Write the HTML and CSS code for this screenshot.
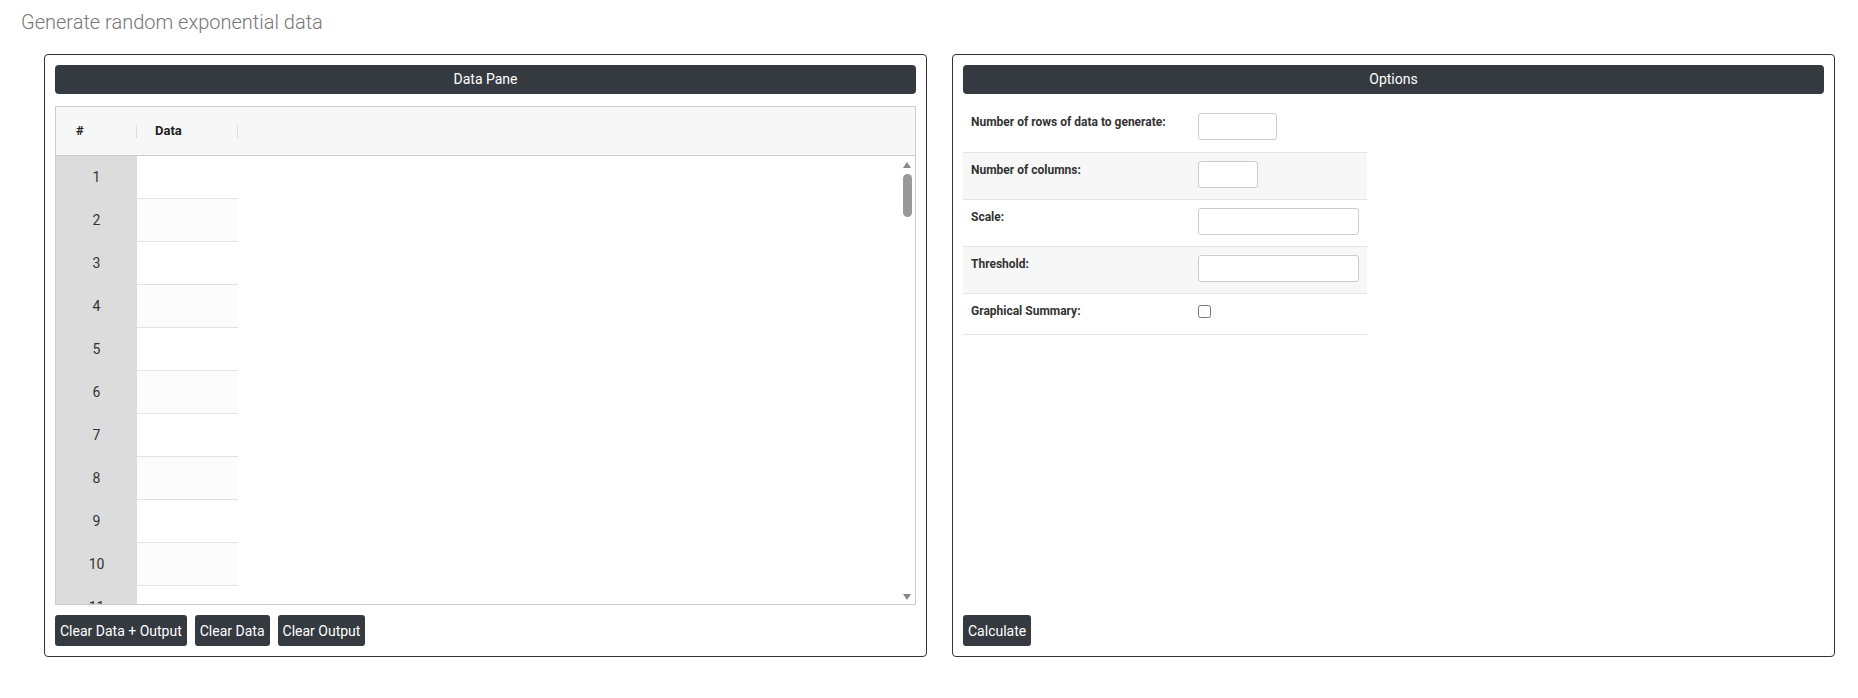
FILE: index.html
```html
<!DOCTYPE html>
<html lang="en">
<head>
  <meta charset="UTF-8">
  <title>Generate random exponential data</title>
  <link rel="stylesheet" href="styles.css">
</head>
<body>
  <div class="page-title">Generate random exponential data</div>
  <div class="panes">
    <div class="pane">
      <div class="pane-header">Data Pane</div>
      <div class="grid">
        <div class="grid-head">
          <div class="head-cell head-index">#</div>
          <div class="head-cell head-data">Data</div>
        </div>
        <div class="grid-body" id="gridBody"></div>
        <div class="scrollbar">
          <div class="arrow-up"></div>
          <div class="thumb"></div>
          <div class="arrow-down"></div>
        </div>
      </div>
      <div class="actions">
        <button class="btn">Clear Data + Output</button>
        <button class="btn">Clear Data</button>
        <button class="btn">Clear Output</button>
      </div>
    </div>
    <div class="pane">
      <div class="pane-header">Options</div>
      <table class="options">
        <tr>
          <td class="opt-label">Number of rows of data to generate:</td>
          <td><input type="text" class="inp inp-sm"></td>
        </tr>
        <tr>
          <td class="opt-label">Number of columns:</td>
          <td><input type="text" class="inp inp-xs"></td>
        </tr>
        <tr>
          <td class="opt-label">Scale:</td>
          <td><input type="text" class="inp inp-lg"></td>
        </tr>
        <tr>
          <td class="opt-label">Threshold:</td>
          <td><input type="text" class="inp inp-lg"></td>
        </tr>
        <tr>
          <td class="opt-label">Graphical Summary:</td>
          <td><input type="checkbox" class="chk"></td>
        </tr>
      </table>
      <div class="actions">
        <button class="btn">Calculate</button>
      </div>
    </div>
  </div>

  <script>
    // fill the empty data grid rows
    const body = document.getElementById('gridBody');
    for (let i = 1; i <= 11; i++) {
      const row = document.createElement('div');
      row.classList.add('grid-row');
      row.innerHTML = `<div class="row-index">${i}</div><div class="row-data"></div>`;
      body.appendChild(row);
    }
  </script>
</body>
</html>
```

FILE: styles.css
```css
body {
  margin: 0;
  font-family: Roboto, 'Liberation Sans', Arial, sans-serif;
  background: #fff;
  color: #212529;
}
.page-title {
  font-size: 20px;
  font-weight: 300;
  color: #777;
  padding: 10px 0 0 21px;
  height: 34px;
  box-sizing: border-box;
  line-height: 24px;
}
.panes {
  display: flex;
  gap: 25px;
  padding: 20px 0 0 44px;
}
.pane {
  width: 883px;
  height: 603px;
  border: 1px solid #333;
  border-radius: 4px;
  padding: 10px;
  box-sizing: border-box;
  display: flex;
  flex-direction: column;
}
.pane-header {
  background: #343a40;
  color: #fff;
  height: 29px;
  line-height: 29px;
  border-radius: 4px;
  text-align: center;
  font-size: 14px;
}
.grid {
  position: relative;
  margin-top: 12px;
  height: 499px;
  border: 1px solid #ccc;
  overflow: hidden;
  box-sizing: border-box;
}
.grid-head {
  display: flex;
  height: 48px;
  background: #f7f7f7;
  border-bottom: 1px solid #ccc;
  align-items: center;
}
.head-cell {
  font-size: 13px;
  font-weight: 700;
  color: #222;
  position: relative;
  height: 100%;
  line-height: 48px;
  box-sizing: border-box;
}
.head-cell::after {
  content: '';
  position: absolute;
  right: 0;
  top: 18px;
  height: 13px;
  border-right: 1px solid #ddd;
}
.head-index {
  width: 81px;
  padding-left: 20px;
}
.head-data {
  width: 101px;
  padding-left: 18px;
}
.grid-row {
  display: flex;
  height: 43px;
}
.row-index {
  width: 81px;
  background: #dcdcdc;
  text-align: center;
  line-height: 43px;
  font-size: 14px;
  color: #333;
}
.row-data {
  width: 101px;
  border-bottom: 1px solid #e2e2e2;
  box-sizing: border-box;
}
.grid-row:nth-child(even) .row-data {
  background: #fcfcfc;
}
.scrollbar {
  position: absolute;
  right: 2px;
  top: 49px;
  bottom: 0;
  width: 11px;
}
.arrow-up, .arrow-down {
  position: absolute;
  left: 1px;
  width: 0;
  height: 0;
  border-left: 4px solid transparent;
  border-right: 4px solid transparent;
}
.arrow-up {
  top: 6px;
  border-bottom: 6px solid #888;
}
.arrow-down {
  bottom: 4px;
  border-top: 6px solid #888;
}
.thumb {
  position: absolute;
  left: 1px;
  top: 18px;
  width: 9px;
  height: 43px;
  background: #999;
  border-radius: 5px;
}
.actions {
  margin-top: auto;
  display: flex;
  gap: 8px;
}
.btn {
  background: #343a40;
  color: #fff;
  border: none;
  border-radius: 3px;
  height: 31px;
  padding: 0 5px;
  font-family: Roboto, 'Liberation Sans', Arial, sans-serif;
  font-size: 14px;
  cursor: pointer;
}
.options {
  border-collapse: collapse;
  width: 404px;
  margin-top: 11px;
}
.options tr {
  border-bottom: 1px solid #e5e5e5;
}
.options tr:nth-child(even) {
  background: #f7f7f7;
}
.options td {
  vertical-align: top;
  height: 47px;
  padding: 8px 0 0 8px;
  box-sizing: border-box;
}
.options tr:last-child td {
  height: 41px;
}
.opt-label {
  width: 227px;
  font-size: 12px;
  font-weight: 700;
  color: #333;
  padding-top: 10px !important;
}
.inp {
  height: 27px;
  border: 1px solid #ccc;
  border-radius: 3px;
  box-sizing: border-box;
  background: #fff;
  margin: 0;
}
.inp-sm { width: 79px; }
.inp-xs { width: 60px; }
.inp-lg { width: 161px; }
.chk {
  margin: 3px 0 0 0;
  width: 13px;
  height: 13px;
}
```
